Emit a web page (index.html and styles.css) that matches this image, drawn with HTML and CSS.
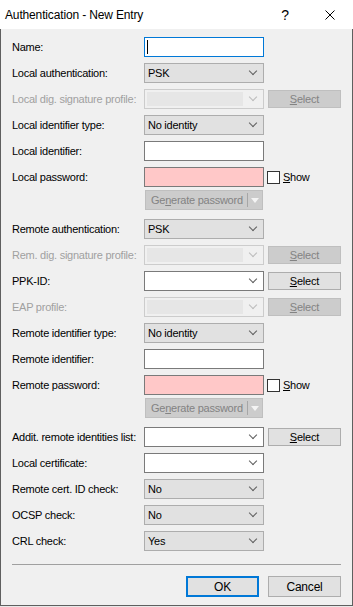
FILE: index.html
```html
<!DOCTYPE html>
<html lang="en">
<head>
  <meta charset="UTF-8" />
  <meta name="viewport" content="width=device-width, initial-scale=1.0"/>
  <title>Authentication - New Entry</title>
  <link rel="stylesheet" href="styles.css">
</head>
<body>
  <div class="window">
    <div class="titlebar">
      <span class="title">Authentication - New Entry</span>
      <span class="help">?</span>
      <span class="close">
        <svg width="10" height="10" viewBox="0 0 10 10"><path d="M0.5 0.5 L9.5 9.5 M9.5 0.5 L0.5 9.5" stroke="#000" stroke-width="1"/></svg>
      </span>
    </div>

    <div class="client">
      <div class="form">
        <div class="row">
          <span class="label">Name:</span>
          <div class="edit focus"><span class="caret"></span></div>
        </div>

        <div class="row">
          <span class="label">Local authentication:</span>
          <div class="combo list"><span class="value">PSK</span><span class="arrow"></span></div>
        </div>

        <div class="row">
          <span class="label disabled">Local dig. signature profile:</span>
          <div class="combo off"><span class="inner"></span><span class="arrow"></span></div>
          <button class="btn side off"><u>S</u>elect</button>
        </div>

        <div class="row">
          <span class="label">Local identifier type:</span>
          <div class="combo list"><span class="value">No identity</span><span class="arrow"></span></div>
        </div>

        <div class="row">
          <span class="label">Local identifier:</span>
          <div class="edit"></div>
        </div>

        <div class="row">
          <span class="label">Local password:</span>
          <div class="edit pwd"></div>
          <label class="check"><span class="box"></span><u>S</u>how</label>
        </div>

        <div class="row gen-row">
          <span></span>
          <div class="split off"><span class="split-text">Ge<u>n</u>erate password</span><span class="split-arrow"></span></div>
        </div>

        <div class="row">
          <span class="label">Remote authentication:</span>
          <div class="combo list"><span class="value">PSK</span><span class="arrow"></span></div>
        </div>

        <div class="row">
          <span class="label disabled">Rem. dig. signature profile:</span>
          <div class="combo off"><span class="inner"></span><span class="arrow"></span></div>
          <button class="btn side off"><u>S</u>elect</button>
        </div>

        <div class="row">
          <span class="label">PPK-ID:</span>
          <div class="combo"><span class="value"></span><span class="arrow"></span></div>
          <button class="btn side"><u>S</u>elect</button>
        </div>

        <div class="row">
          <span class="label disabled">EAP profile:</span>
          <div class="combo off"><span class="inner"></span><span class="arrow"></span></div>
          <button class="btn side off"><u>S</u>elect</button>
        </div>

        <div class="row">
          <span class="label">Remote identifier type:</span>
          <div class="combo list"><span class="value">No identity</span><span class="arrow"></span></div>
        </div>

        <div class="row">
          <span class="label">Remote identifier:</span>
          <div class="edit"></div>
        </div>

        <div class="row">
          <span class="label">Remote password:</span>
          <div class="edit pwd"></div>
          <label class="check"><span class="box"></span><u>S</u>how</label>
        </div>

        <div class="row gen-row">
          <span></span>
          <div class="split off"><span class="split-text">Ge<u>n</u>erate password</span><span class="split-arrow"></span></div>
        </div>

        <div class="row">
          <span class="label">Addit. remote identities list:</span>
          <div class="combo"><span class="value"></span><span class="arrow"></span></div>
          <button class="btn side"><u>S</u>elect</button>
        </div>

        <div class="row">
          <span class="label">Local certificate:</span>
          <div class="combo"><span class="value"></span><span class="arrow"></span></div>
        </div>

        <div class="row">
          <span class="label">Remote cert. ID check:</span>
          <div class="combo list"><span class="value">No</span><span class="arrow"></span></div>
        </div>

        <div class="row">
          <span class="label">OCSP check:</span>
          <div class="combo list"><span class="value">No</span><span class="arrow"></span></div>
        </div>

        <div class="row">
          <span class="label">CRL check:</span>
          <div class="combo list"><span class="value">Yes</span><span class="arrow"></span></div>
        </div>
      </div>

      <div class="separator"></div>

      <div class="actions">
        <button class="btn default">OK</button>
        <button class="btn">Cancel</button>
      </div>
    </div>
  </div>
</body>
</html>
```

FILE: styles.css
```css
html, body {
  margin: 0;
  background: #e8e8e8;
}
body {
  font-family: 'Liberation Sans', Arial, sans-serif;
  font-size: 11px;
  letter-spacing: -0.25px;
  color: #000;
}
.window {
  width: 353px;
  height: 606px;
  display: flex;
  flex-direction: column;
}
.titlebar {
  height: 29px;
  background: #fff;
  display: flex;
  align-items: center;
  flex-shrink: 0;
}
.title {
  font-size: 12px;
  letter-spacing: -0.15px;
  margin-left: 5px;
  flex: 1;
}
.help {
  font-size: 14px;
  width: 46px;
  text-align: center;
  margin-right: -1px;
}
.close {
  width: 46px;
  display: flex;
  justify-content: center;
}
.close svg {
  display: block;
}

.client {
  flex: 1;
  background: #f0f0f0;
  border: 1px solid #5f5f5f;
  border-top: none;
  display: flex;
  flex-direction: column;
}
.form {
  padding: 8px 0 0 11px;
  display: flex;
  flex-direction: column;
  gap: 6px;
}
.row {
  display: grid;
  grid-template-columns: 132px 120px auto;
  align-items: center;
  height: 20px;
}
.gen-row {
  margin-top: -3px;
  margin-bottom: 3px;
}
.label {
  white-space: nowrap;
}
.label.disabled {
  color: #a0a0a0;
}

.edit {
  box-sizing: border-box;
  height: 20px;
  background: #fff;
  border: 1px solid #7a7a7a;
  position: relative;
}
.edit.focus {
  border-color: #0078d7;
}
.caret {
  position: absolute;
  left: 2px;
  top: 2px;
  width: 1px;
  height: 14px;
  background: #000;
}
.edit.pwd {
  background: #ffc8c8;
}

.combo {
  box-sizing: border-box;
  height: 20px;
  background: #fff;
  border: 1px solid #7a7a7a;
  display: flex;
  align-items: center;
}
.combo.list {
  background: #e1e1e1;
  border-color: #adadad;
}
.combo.off {
  background: #f0f0f0;
  border-color: #cccccc;
}
.combo .value {
  flex: 1;
  padding-left: 3px;
}
.combo .inner {
  flex: 1;
  align-self: stretch;
  margin: 2px 0 2px 2px;
  background: #e6e6e6;
}
.arrow {
  width: 20px;
  height: 100%;
  display: flex;
  align-items: center;
  justify-content: center;
}
.arrow::before {
  content: "";
  width: 5px;
  height: 5px;
  border-right: 1px solid #606060;
  border-bottom: 1px solid #606060;
  transform: translateY(-2px) rotate(45deg);
}
.combo.off .arrow::before {
  border-color: #bcbcbc;
}

.btn {
  box-sizing: border-box;
  font-family: inherit;
  font-size: 11px;
  letter-spacing: -0.2px;
  background: #e1e1e1;
  border: 1px solid #adadad;
  color: #000;
  padding: 0;
  margin: 0;
}
.btn.side {
  width: 73px;
  height: 18px;
  margin-left: 4px;
}
.btn.off {
  background: #cccccc;
  border-color: #bfbfbf;
  color: #838383;
}

.check {
  display: flex;
  align-items: center;
  margin-left: 3px;
}
.check .box {
  box-sizing: border-box;
  width: 13px;
  height: 13px;
  background: #fff;
  border: 1px solid #333;
  margin-right: 3px;
}

.split {
  box-sizing: border-box;
  height: 20px;
  width: 118px;
  margin-left: 1px;
  display: flex;
  align-items: center;
  background: #cccccc;
  border: 1px solid #bfbfbf;
  color: #838383;
  font-size: 11px;
}
.split-text {
  flex: 1;
  padding-left: 5px;
  white-space: nowrap;
}
.split-arrow {
  width: 14px;
  height: 14px;
  border-left: 1px solid #a6a6a6;
  display: flex;
  align-items: center;
  justify-content: center;
}
.split-arrow::before {
  content: "";
  border-left: 4px solid transparent;
  border-right: 4px solid transparent;
  border-top: 5px solid #f4f4f4;
}

.separator {
  margin: 13px 11px 0 11px;
  height: 1px;
  background: #a0a0a0;
}
.actions {
  display: flex;
  justify-content: flex-end;
  gap: 9px;
  padding: 11px 11px 0 0;
}
.actions .btn {
  width: 73px;
  height: 21px;
  font-size: 12px;
}
.btn.default {
  border: 2px solid #0078d7;
}
```
